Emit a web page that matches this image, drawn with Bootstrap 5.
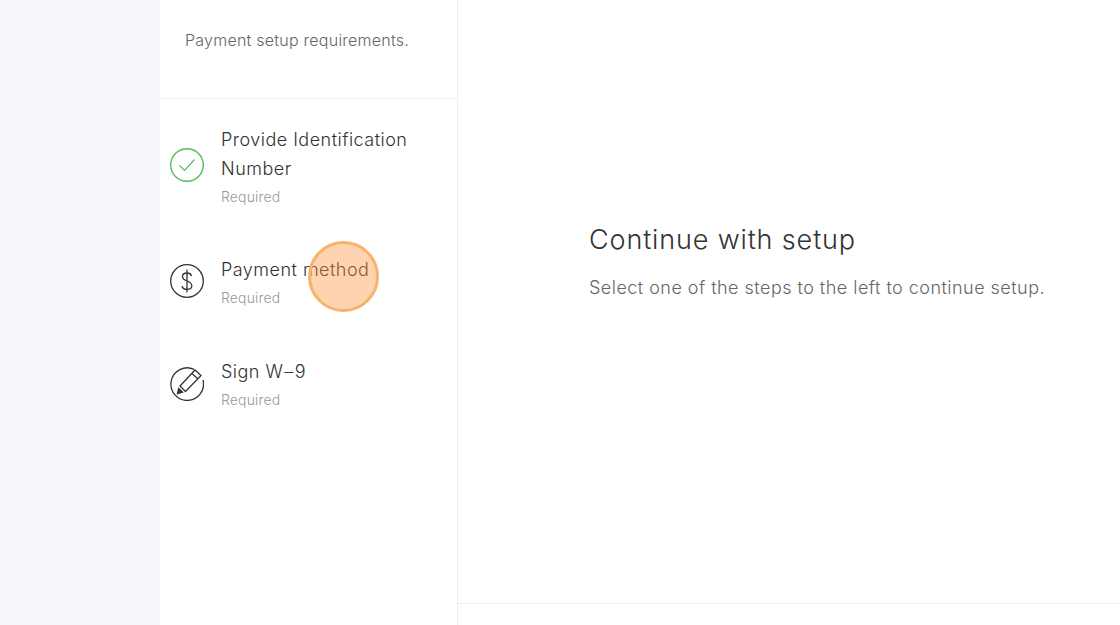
<!doctype html>
<html lang="en"><head><meta charset="utf-8"><title>Payment setup</title>
<link href="https://cdn.jsdelivr.net/npm/bootstrap@5.3.0/dist/css/bootstrap.min.css" rel="stylesheet">
<style>
html,body{height:625px;overflow:hidden}
body{font-family:Inter,"Liberation Sans",sans-serif;font-weight:300;background:#fff;position:relative}
.rail{width:160px;background:#f4f6fb}
.panel{width:298px;border-right:1px solid #efefef}
.panel-head{height:99px;padding:30px 0 0 25px;border-bottom:1px solid #efefef;font-size:16px;line-height:21px;color:#666;letter-spacing:.24px}
.step{padding:0 10px;gap:17px}
.step-one{height:116px;margin-top:9px}
.step-one svg{margin-bottom:2px}
.step-two{height:102px;margin-top:6px}
.step-three{height:102px}
.step-three svg{margin-top:2px}
.step svg{width:34px;height:34px;flex:none}
.step-name{font-size:18px;line-height:29px;color:#333;letter-spacing:.48px}
.step-dash{margin:0 1px}
.step-note{font-size:14px;line-height:20px;color:#999;margin-top:4px;letter-spacing:.15px}
.stage{padding:0 0 21px}
.stage-body{padding:222px 0 0 131px}
.stage-title{font-size:27px;line-height:36px;font-weight:300;color:#333;margin:0 0 18px;letter-spacing:.86px}
.stage-text{font-size:18px;line-height:24px;color:#666;margin:0;letter-spacing:.47px;white-space:nowrap}
.stage-foot{border-top:1px solid #efefef;height:1px}
.pulse{position:absolute;left:308px;top:241px;width:71px;height:71px;border-radius:50%;background:rgba(252,145,55,.4);border:3px solid #f8b26f}
</style></head>
<body>
<div class="d-flex h-100">
  <div class="rail"></div>
  <div class="panel">
    <div class="panel-head">Payment setup requirements.</div>
    <div class="step step-one d-flex align-items-center">
      <svg viewBox="0 0 34 34" fill="none"><circle cx="17" cy="17" r="16.300" stroke="#5cb85c" stroke-width="1.400"/><path d="M9.500 17.500l5 5L24.500 11.500" stroke="#5cb85c" stroke-width="1.200"/></svg>
      <div><div class="step-name">Provide Identification<br>Number</div><div class="step-note">Required</div></div>
    </div>
    <div class="step step-two d-flex align-items-center">
      <svg viewBox="0 0 34 34" fill="none" stroke="#333" stroke-width="1.300"><circle cx="17" cy="17" r="16.300"/><path d="M21.500 12c-.5-1.800-2.300-3-4.500-3-2.600 0-4.500 1.600-4.500 3.700 0 5 9.300 3.600 9.300 8.800 0 2.400-2 3.900-4.800 3.900-2.500 0-4.500-1.300-5-3.400M17 5.500v23"/></svg>
      <div><div class="step-name">Payment method</div><div class="step-note">Required</div></div>
    </div>
    <div class="step step-three d-flex align-items-center">
      <svg viewBox="0 0 34 34" fill="none" stroke="#333" stroke-width="1.300"><path d="M24 2.300A16.300 16.300 0 1 0 33 13"/><path d="M10 19L25 3l6 5.500-15.500 16zM10 19l5.500 5.500M22 6.500l6 5.500"/><path d="M7.500 26.500l1.200-5 3.800 3.600z" fill="#333"/></svg>
      <div><div class="step-name">Sign W<span class="step-dash">–</span>9</div><div class="step-note">Required</div></div>
    </div>
  </div>
  <div class="stage flex-grow-1 d-flex flex-column justify-content-between">
    <div class="stage-body">
      <h2 class="stage-title">Continue with setup</h2>
      <p class="stage-text">Select one of the steps to the left to continue setup.</p>
    </div>
    <div class="stage-foot"></div>
  </div>
</div>
<div class="pulse"></div>
</body></html>
